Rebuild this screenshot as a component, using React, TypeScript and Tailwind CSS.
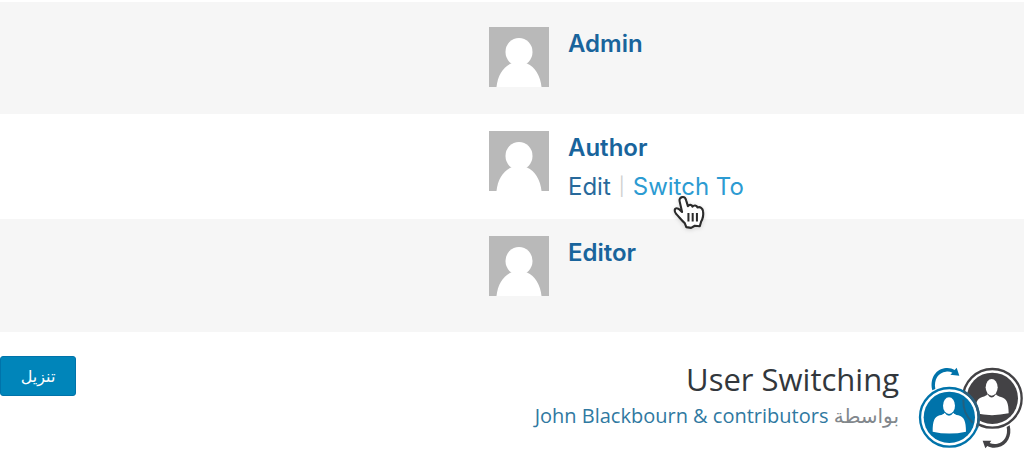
import React from "react";

interface User {
  name: string;
  rowClass: string;
  showActions?: boolean;
}

const users: User[] = [
  { name: "Admin", rowClass: "bg-[#f6f6f6] pt-[25px] pb-[27px]" },
  { name: "Author", rowClass: "bg-white pt-[17px] pb-7", showActions: true },
  { name: "Editor", rowClass: "bg-[#f6f6f6] pt-[17px] pb-9" },
];

function Avatar() {
  return (
    <svg viewBox="0 0 60 60" className="w-[60px] h-[60px] shrink-0" aria-hidden="true">
      <rect width="60" height="60" fill="#b9b9b9" />
      <ellipse cx="30" cy="25" rx="13.5" ry="14" fill="#fff" />
      <path d="M7.5 60C8.5 49 14 40 22 36.5Q30 34 38 36.5C46 40 51.5 49 52.5 60Z" fill="#fff" />
    </svg>
  );
}

function HandCursor() {
  return (
    <svg
      viewBox="0 0 31 33"
      className="absolute left-10 top-6 w-[33px] h-[35px] drop-shadow-sm"
      aria-hidden="true"
    >
      <path
        d="M8.500 2C10.500 1.500 11.800 3 12.300 5L14 10.500C15 8.800 17.800 9 18.300 11C19.600 9.300 22.300 9.500 23 11.800C25.500 10.800 28 12.300 28.300 15.500C28.800 19 28.300 22 26.500 25L25.200 29.500L20.500 29L17 31L12.500 30.300L11 26.500C8 24 5.500 20.500 3 18C0.800 15.500 1.200 12.500 3.500 12.500C5.500 12.500 7 14.500 8.500 16L6.200 6C5.700 4 6.500 2.500 8.500 2Z"
        fill="#fff"
        stroke="#2b2b2b"
        strokeWidth="2"
        strokeLinejoin="round"
      />
      <path d="M14.500 17V25M18.500 17V25M22.500 17V25" stroke="#2b2b2b" strokeWidth="1.900" />
    </svg>
  );
}

function SwitchingLogo() {
  return (
    <svg viewBox="54 51 315 246" className="w-[105px] h-[82px] shrink-0" aria-hidden="true">
      {/* back user */}
      <circle cx="277" cy="145" r="88" fill="#fff" stroke="#434245" strokeWidth="7" />
      <circle cx="277" cy="145" r="77" fill="#434245" />
      <ellipse cx="275" cy="112" rx="18" ry="25" fill="#fff" />
      <path
        d="M226 190C226 158 231 146 247 141C255 139 259 137 262 133Q275 152 288 133C291 137 295 139 303 141C320 146 326 158 326 190Q276 201 226 190Z"
        fill="#fff"
      />
      {/* front user */}
      <circle cx="148" cy="202" r="88" fill="#fff" stroke="#0073aa" strokeWidth="7" />
      <circle cx="148" cy="202" r="77" fill="#0073aa" />
      <path d="M191 125A88 88 0 0 1 231 232" fill="none" stroke="#2d5c77" strokeWidth="8" />
      <path d="M190 149A88 88 0 0 0 218 218" fill="none" stroke="#23607f" strokeWidth="6" />
      <ellipse cx="147" cy="167" rx="18" ry="25" fill="#fff" />
      <path
        d="M98 245C98 213 103 201 119 196C127 194 131 192 134 188Q147 207 160 188C163 192 167 194 175 196C192 201 198 213 198 245Q148 256 98 245Z"
        fill="#fff"
      />
      {/* arrows */}
      <path
        d="M97 121C88 84 109 56 138 54C148 53 157 56 164 60L170 53L178 77L151 74L157 68C151 65 145 64 138 65C115 67 101 88 106 117Z"
        fill="#0073aa"
      />
      <path
        d="M320 231C325 256 313 277 292 281C283 283 276 281 269 279L274 272L248 272L256 295L262 288C271 293 282 295 294 292C322 286 337 258 329 226Z"
        fill="#434245"
      />
    </svg>
  );
}

function UserRow({ user }: { user: User }) {
  return (
    <li className={`flex gap-[19px] pl-[47.75%] ${user.rowClass}`}>
      <Avatar />
      <div className="h-[60px] whitespace-nowrap text-2xl">
        <a href="#" className="block font-semibold leading-[34px] text-[#19649c]">
          {user.name}
        </a>
        {user.showActions && (
          <div className="mt-1.5 flex gap-2 leading-8">
            <a href="#" className="text-[#28699b]">
              Edit
            </a>
            <span className="text-lg leading-8 text-[#d0d0d0]">|</span>
            <span className="relative">
              <a href="#" className="text-[#2c9bd2]">
                Switch To
              </a>
              <HandCursor />
            </span>
          </div>
        )}
      </div>
    </li>
  );
}

export default function App() {
  return (
    <div className="bg-white">
      <ul className="pt-0.5 font-['Inter',sans-serif]">
        {users.map((user) => (
          <UserRow key={user.name} user={user} />
        ))}
      </ul>

      <header
        dir="rtl"
        className="flex items-start pr-px pt-6 font-['Open_Sans','Noto_Sans','DejaVu_Sans',sans-serif]"
      >
        <div className="pt-[11px]">
          <SwitchingLogo />
        </div>
        <div className="mr-[19px]">
          <h1 className="text-[31px] leading-[46px] text-[#32373c]">User Switching</h1>
          <p className="text-xl leading-7 text-[#82878c]">
            بواسطة{" "}
            <a href="#" className="text-[#3079a1]">
              John Blackbourn &amp; contributors
            </a>
          </p>
        </div>
        <button
          type="button"
          className="mr-auto h-10 w-[76px] rounded-[3px] border border-[#0073aa] bg-[#0085ba] text-base text-white"
        >
          تنزيل
        </button>
      </header>
    </div>
  );
}
